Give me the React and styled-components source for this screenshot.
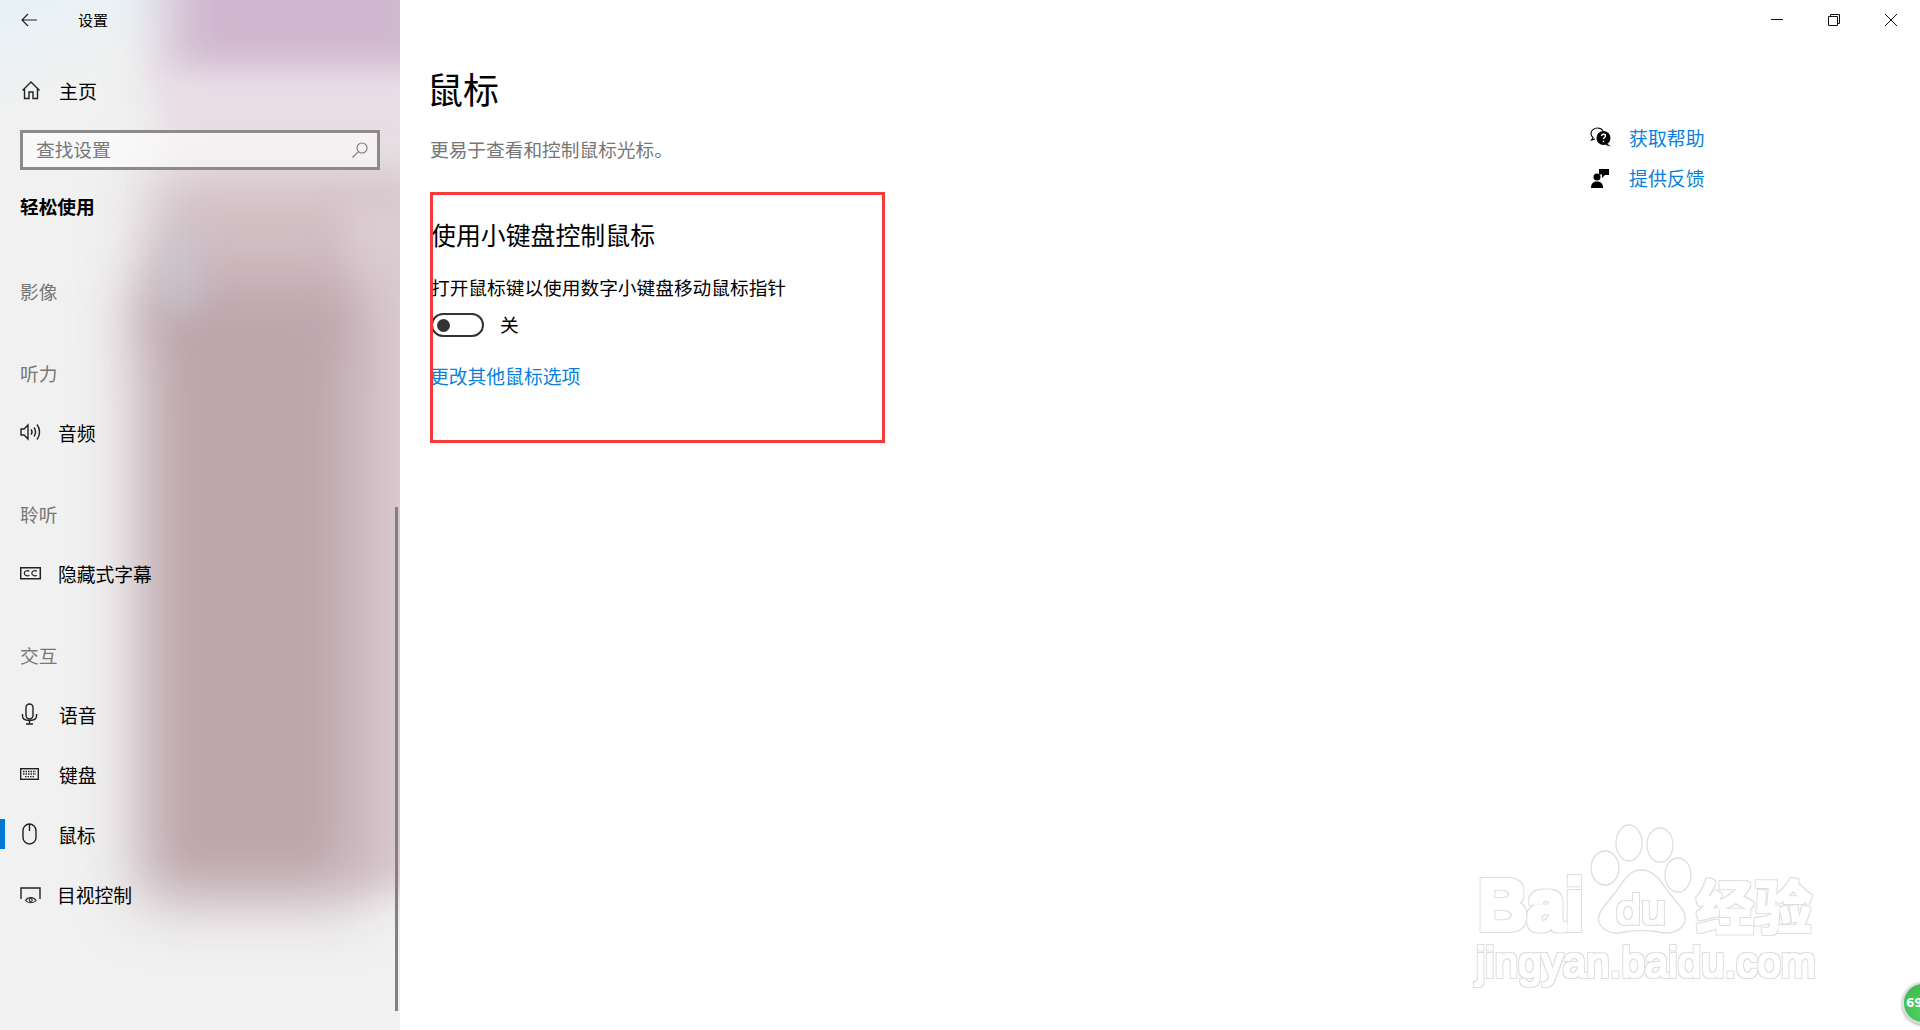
import React from 'react'
import styled, {createGlobalStyle} from 'styled-components'

const Global = createGlobalStyle`
	html, body {
		margin: 0;
		height: 100%;
		background: #fff;
		overflow: hidden;
	}
	body {
		font-family: "Noto Sans CJK SC", "Noto Sans", sans-serif;
		color: #000;
	}
	* { box-sizing: border-box; }
`

const Page = styled.div`
	position: relative;
	display: grid;
	grid-template-columns: 400px 1fr;
	width: 1920px;
	height: 1030px;
	overflow: hidden;
`

/* sidebar */
const Sidebar = styled.aside`
	position: relative;
	display: flex;
	flex-direction: column;
	height: 1030px;
	overflow: hidden;
	background: #f1f1f1;
`

const Backdrop = styled.div`
	position: absolute;
	inset: 0;
	background:
		linear-gradient(160deg, #e6f2f6 0, rgba(241, 241, 241, 0) 110px);
`

const Blob = styled.div`
	position: absolute;
	left: ${p => p.x}px;
	top: ${p => p.y}px;
	width: ${p => p.w}px;
	height: ${p => p.h}px;
	background: ${p => p.color};
	filter: blur(${p => p.blur || 30}px);
`

const SideContent = styled.div`
	position: relative;
	display: flex;
	flex-direction: column;
`

const SideHeader = styled.div`
	display: flex;
	align-items: center;
	height: 40px;
	padding-left: 20px;
`

const AppName = styled.span`
	margin-left: 40px;
	font-size: 15px;
	line-height: 20px;
`

const Home = styled.div`
	display: flex;
	align-items: center;
	height: 48px;
	margin-top: 27px;
	padding: 0 0 2px 20px;
	font-size: 19px;
`

const Search = styled.div`
	display: flex;
	align-items: center;
	justify-content: space-between;
	width: 360px;
	height: 40px;
	margin: 15px 0 0 20px;
	padding: 0 8px 4px 13px;
	border: 3px solid #8e898b;
	background: rgba(255, 255, 255, 0.6);
	font-size: 18.7px;
	color: #777;
`

const SearchIcon = styled.svg`
	margin-top: 4px;
`

const SectionTitle = styled.div`
	height: 30px;
	margin: 21px 0 1px 20px;
	font-size: 18.7px;
	line-height: 30px;
	font-weight: 700;
`

const GroupLabel = styled.div`
	height: 30px;
	margin: ${p => p.top}px 0 14px 20px;
	font-size: 18.7px;
	line-height: 28px;
	color: #777;
`

const NavRow = styled.div`
	position: relative;
	display: flex;
	align-items: center;
	height: 60px;
	padding: 0 0 2px 20px;
	font-size: 18.8px;
	&::before {
		content: '';
		display: ${p => (p.active ? 'block' : 'none')};
		position: absolute;
		left: 0;
		top: 14px;
		width: 5px;
		height: 30px;
		background: #0078d7;
	}
`

const IconCell = styled.span`
	display: flex;
	align-items: center;
	flex: none;
	width: ${p => p.width || 39}px;
	height: 24px;
`

const Scrollbar = styled.div`
	position: absolute;
	right: 2px;
	top: 507px;
	width: 3px;
	height: 504px;
	background: #85807f;
`

/* main */
const Main = styled.main`
	position: relative;
	display: flex;
	flex-direction: column;
	background: #fff;
`

const TitleBar = styled.div`
	display: flex;
	justify-content: flex-end;
	height: 40px;
	padding-right: 1px;
`

const WinButton = styled.span`
	display: flex;
	align-items: center;
	justify-content: center;
	width: 57px;
	height: 40px;
`

const Body = styled.div`
	display: grid;
	grid-template-columns: 1fr 330px;
`

const Content = styled.section`
	padding: 24px 0 0 30px;
`

const Title = styled.h1`
	margin: 0 0 0 -3px;
	font-size: 36px;
	line-height: 48px;
	font-weight: 400;
`

const Subtitle = styled.p`
	margin: 22px 0 0;
	font-size: 18.7px;
	line-height: 30px;
	color: #767676;
`

const Heading = styled.h2`
	margin: 52px 0 0 1px;
	font-size: 24.9px;
	line-height: 36px;
	font-weight: 400;
`

const Label = styled.p`
	margin: 21px 0 0 1px;
	font-size: 18.7px;
	line-height: 28px;
`

const ToggleRow = styled.div`
	display: flex;
	align-items: center;
	height: 24px;
	margin: 12px 0 0 1px;
`

const ToggleText = styled.span`
	margin: 0 0 3px 16px;
	font-size: 18.7px;
	line-height: 24px;
`

const Toggle = styled.span`
	display: flex;
	align-items: center;
	width: 53px;
	height: 24px;
	padding-left: 4px;
	border: 2px solid #333;
	border-radius: 12px;
	&::after {
		content: '';
		width: 13px;
		height: 13px;
		border-radius: 50%;
		background: #333;
	}
`

const Link = styled.a`
	display: block;
	margin: 25px 0 0;
	font-size: 18.8px;
	line-height: 28px;
	color: #0a7fdc;
`

const Aside = styled.div`
	display: flex;
	flex-direction: column;
	padding-top: 77px;
`

const HelpRow = styled.div`
	display: flex;
	align-items: center;
	height: 40px;
	font-size: 18.9px;
	color: #0a7fdc;
`

const HelpIcon = styled.span`
	display: flex;
	flex: none;
	width: 39px;
	padding-top: 2px;
`

/* things lying on top of the screenshot */
const Marker = styled.div`
	position: absolute;
	left: 430px;
	top: 192px;
	width: 455px;
	height: 251px;
	border: 3px solid #f43a3a;
`

const Watermark = styled.svg`
	position: absolute;
	left: 1440px;
	top: 800px;
`

const Ball = styled.div`
	position: absolute;
	left: 1902px;
	top: 982px;
	display: flex;
	align-items: center;
	width: 42px;
	height: 42px;
	padding-left: 2px;
	border: 2px solid #dcdcdc;
	border-radius: 50%;
	background: radial-gradient(circle at 50% 70%, #52d060, #37b54a);
	box-shadow: 0 1px 3px rgba(0, 0, 0, 0.4);
	font: 700 12px "DejaVu Sans", sans-serif;
	color: #fff;
`

const Line = ({children, size = 24, ...props}) => (
	<svg width={size} height={size} viewBox='0 0 24 24' fill='none' stroke='#222' strokeWidth='1.4' {...props}>
		{children}
	</svg>
)

const icons = {
	home: (
		<Line>
			<path d='M2.5 12.5 11 4l8.5 8.5M4.500 11v9.500h4.500V14h4v6.500h4.500V11' />
		</Line>
	),
	sound: (
		<Line>
			<path d='M1 9h3l4-4v14l-4-4H1zM11 9.500c1.200 1.400 1.200 3.600 0 5M14 7.500c1.800 2.600 1.800 6.400 0 9M17 4.500c3.400 4.400 3.400 10.600 0 15' />
		</Line>
	),
	cc: (
		<Line>
			<path d='M.7 6.700h19.600v11H.7z' strokeWidth='1.500' />
			<path d='M9.300 10.300c-1-1.100-5-1.100-5 1.900s4 3 5 1.900M16.800 10.300c-1-1.100-5-1.100-5 1.900s4 3 5 1.900' strokeWidth='1.200' />
		</Line>
	),
	mic: (
		<Line>
			<rect x='6' y='2' width='7' height='15' rx='3.500' />
			<path d='M2.500 12v2c0 3 3 4.500 7 4.500s7-1.500 7-4.500v-2M9.500 18.500V22M6 22h7' />
		</Line>
	),
	keyboard: (
		<Line>
			<rect x='.7' y='6.700' width='17.600' height='10.600' />
			<path d='M3 9.500h13M3 12h13M5 14.700h9' strokeDasharray='1.500 1' strokeWidth='1.300' />
		</Line>
	),
	mouse: (
		<Line>
			<rect x='3' y='2' width='13' height='20' rx='6.500' />
			<path d='M9.500 2v7' />
		</Line>
	),
	eye: (
		<Line>
			<path d='M1 17V6h19v11' />
			<path d='M5.500 18.500c2.500-4 8-4 10.500 0-2.500 3-8 3-10.500 0z' strokeWidth='1.100' />
			<circle cx='10.700' cy='18' r='1.500' strokeWidth='1.100' />
		</Line>
	),
}

const Nav = ({icon, active, offset = 38, children}) => (
	<NavRow active={active}>
		<IconCell width={offset}>{icons[icon]}</IconCell>
		{children}
	</NavRow>
)

// outline look of the watermark: ring in grey, inside in white
const Outline = ({id, r}) => (
	<filter id={id} x='-10%' y='-10%' width='120%' height='120%'>
		<feMorphology in='SourceAlpha' operator='dilate' radius={r} result='outer' />
		<feMorphology in='SourceAlpha' operator='dilate' radius={r - 1} result='inner' />
		<feFlood floodColor='#dedede' />
		<feComposite in2='outer' operator='in' result='grey' />
		<feFlood floodColor='#fff' />
		<feComposite in2='inner' operator='in' result='white' />
		<feMerge result='ring'>
			<feMergeNode in='grey' />
			<feMergeNode in='white' />
		</feMerge>
		<feGaussianBlur in='ring' stdDeviation='0.4' />
	</filter>
)

const App = () => (
	<Page>
		<Global />
		<Sidebar>
			<Backdrop />
			<Blob x={165} y={-60} w={280} h={150} color='#cfb8cf' blur={26} />
			<Blob x={160} y={75} w={280} h={70} color='#eadde6' blur={18} />
			<Blob x={150} y={165} w={290} h={180} color='#d2bfc4' blur={30} />
			<Blob x={345} y={200} w={90} h={690} color='#dccdd2' blur={16} />
			<Blob x={140} y={280} w={225} h={620} color='#bca5ab' blur={30} />
			<Blob x={165} y={230} w={30} h={80} color='#c8c4cf' blur={18} />
			<SideContent>
				<SideHeader>
					<svg width='18' height='18' viewBox='0 0 18 18' fill='none' stroke='#222' strokeWidth='1.200'>
						<path d='M2 9h15M8 3 2 9l6 6' />
					</svg>
					<AppName>设置</AppName>
				</SideHeader>
				<Home>
					<IconCell>{icons.home}</IconCell>
					主页
				</Home>
				<Search>
					查找设置
					<SearchIcon width='18' height='18' viewBox='0 0 18 18' fill='none' stroke='#777' strokeWidth='1.100'>
						<circle cx='11' cy='7' r='5' />
						<path d='M7.300 10.700 1.500 16.500' />
					</SearchIcon>
				</Search>
				<SectionTitle>轻松使用</SectionTitle>
				<GroupLabel top={55}>影像</GroupLabel>
				<GroupLabel top={38}>听力</GroupLabel>
				<Nav icon='sound'>音频</Nav>
				<GroupLabel top={37}>聆听</GroupLabel>
				<Nav icon='cc'>隐藏式字幕</Nav>
				<GroupLabel top={37}>交互</GroupLabel>
				<Nav icon='mic' offset={39}>语音</Nav>
				<Nav icon='keyboard' offset={39}>键盘</Nav>
				<Nav icon='mouse' active>鼠标</Nav>
				<Nav icon='eye' offset={37}>目视控制</Nav>
			</SideContent>
			<Scrollbar />
		</Sidebar>
		<Main>
			<TitleBar>
				<WinButton>
					<svg width='14' height='14' viewBox='0 0 14 14' stroke='#111' strokeWidth='1'>
						<path d='M1 6.500h12' />
					</svg>
				</WinButton>
				<WinButton>
					<svg width='14' height='14' viewBox='0 0 14 14' fill='none' stroke='#111' strokeWidth='1'>
						<path d='M1.500 3.500h9v9h-9zM3.500 3.500v-2h9v9h-2' />
					</svg>
				</WinButton>
				<WinButton>
					<svg width='14' height='14' viewBox='0 0 14 14' stroke='#111' strokeWidth='1'>
						<path d='M1 1l12 12M13 1 1 13' />
					</svg>
				</WinButton>
			</TitleBar>
			<Body>
				<Content>
					<Title>鼠标</Title>
					<Subtitle>更易于查看和控制鼠标光标。</Subtitle>
					<Heading>使用小键盘控制鼠标</Heading>
					<Label>打开鼠标键以使用数字小键盘移动鼠标指针</Label>
					<ToggleRow>
						<Toggle />
						<ToggleText>关</ToggleText>
					</ToggleRow>
					<Link>更改其他鼠标选项</Link>
				</Content>
				<Aside>
					<HelpRow>
						<HelpIcon>
							<svg width='22' height='22' viewBox='0 0 22 22'>
								<path d='M7.500 1C3.900 1 1 3.300 1 6.500c0 1.700.8 3 2 4L1.500 13l3.500-1' fill='none' stroke='#000' strokeWidth='1.100' />
								<path d='M7.500 1c2.500 0 4.500 1.100 5.500 2.800' fill='none' stroke='#000' strokeWidth='1.100' />
								<circle cx='13.500' cy='11' r='7' />
								<path d='M17 16.500l4 3-5.500-1.500z' />
								<path d='M11.500 9c.2-2.300 4-2.300 4 0 0 1.600-2 1.500-2 3.200M13.500 13.700v1.500' fill='none' stroke='#fff' strokeWidth='1.400' />
							</svg>
						</HelpIcon>
						获取帮助
					</HelpRow>
					<HelpRow>
						<HelpIcon>
							<svg width='22' height='22' viewBox='0 0 22 22'>
								<circle cx='7' cy='10' r='3.500' />
								<path d='M1 21c0-5 2.500-6.500 6-6.500s6 1.500 6 6.500z' />
								<path d='M9 2h10v6h-4l-3 3V7.500H9z' />
							</svg>
						</HelpIcon>
						提供反馈
					</HelpRow>
				</Aside>
			</Body>
		</Main>
		<Marker />
		<Watermark width='480' height='230' viewBox='0 0 480 230' fill='#000'>
			<defs>
				<Outline id='fat' r={3} />
				<Outline id='mid' r={2} />
			</defs>
			<text filter='url(#fat)' x='38' y='130' fontFamily='"Liberation Sans", sans-serif' fontWeight='700' fontSize='72' textLength='106' lengthAdjust='spacingAndGlyphs'>Bai</text>
			<g fill='#fff' stroke='#dedede' strokeWidth='1.300'>
				<ellipse cx='165' cy='68' rx='14' ry='17' />
				<ellipse cx='189' cy='43' rx='13' ry='18' />
				<ellipse cx='220' cy='45' rx='13' ry='17' />
				<ellipse cx='238' cy='75' rx='13' ry='17' />
				<path d='M201 70c-14 0-18 14-27 24-8 10-18 20-15 28 3 9 14 13 25 10 11-2 24-2 35 0 12 3 23-1 26-11 2-9-7-17-15-27-8-10-14-24-29-24z' />
			</g>
			<text filter='url(#mid)' x='176' y='124' fontFamily='"Liberation Sans", sans-serif' fontSize='40' textLength='50' lengthAdjust='spacingAndGlyphs'>du</text>
			<text filter='url(#mid)' x='256' y='129' fontFamily='"Noto Sans CJK SC", sans-serif' fontWeight='700' fontSize='58' textLength='116' lengthAdjust='spacingAndGlyphs'>经验</text>
			<text filter='url(#mid)' x='36' y='177' fontFamily='"Liberation Sans", sans-serif' fontSize='42' textLength='340' lengthAdjust='spacingAndGlyphs'>jingyan.baidu.com</text>
		</Watermark>
		<Ball>69</Ball>
	</Page>
)

export default App
